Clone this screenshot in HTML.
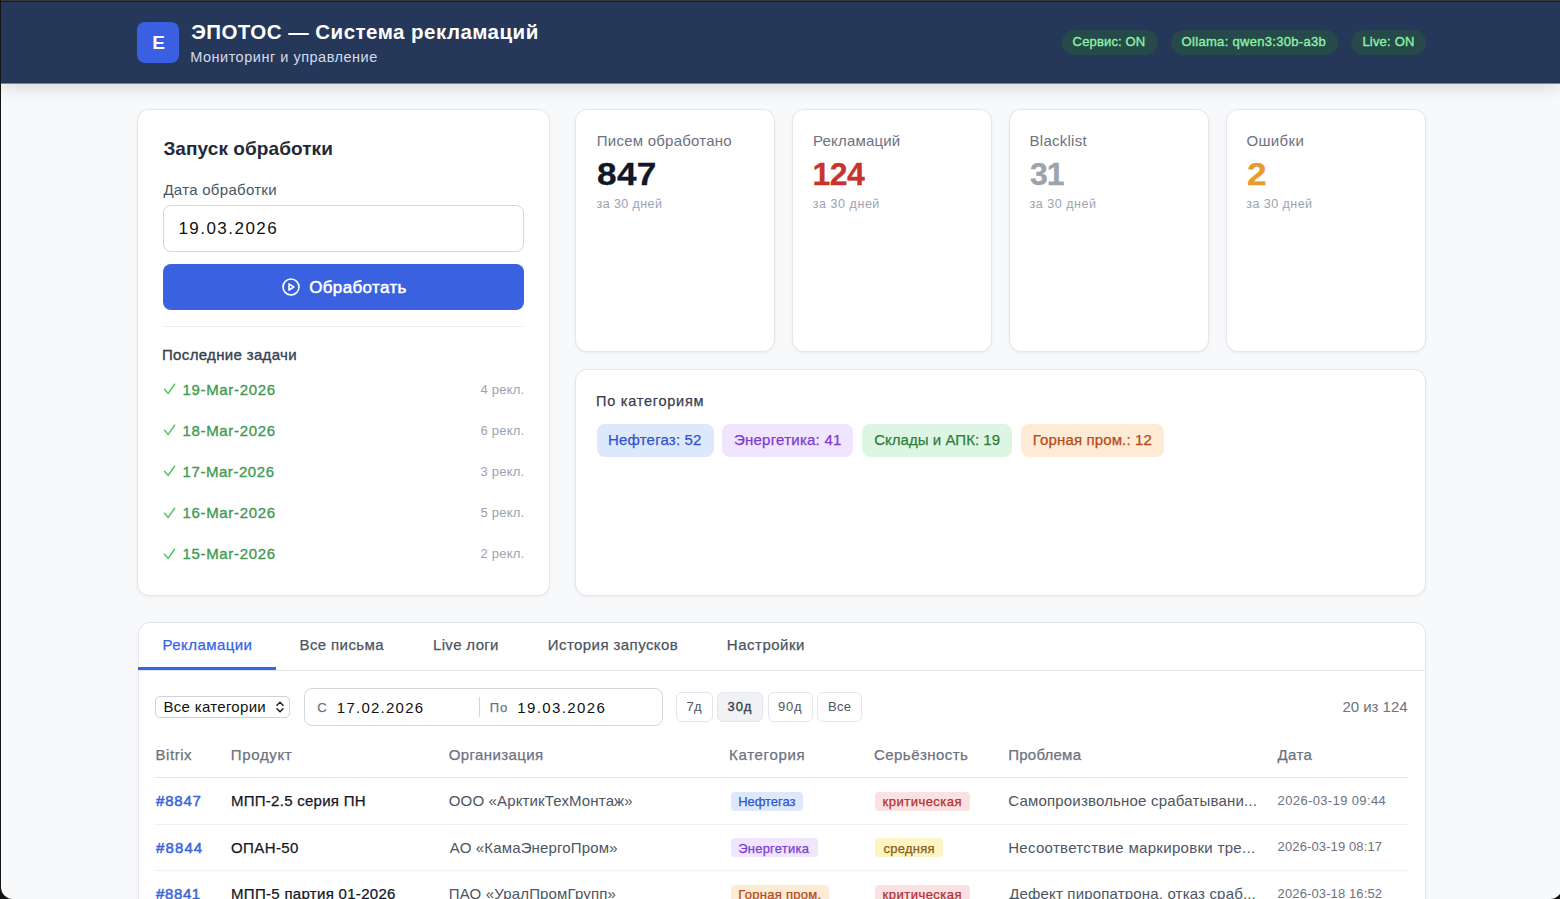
<!DOCTYPE html>
<html lang="ru"><head><meta charset="utf-8"><title>ЭПОТОС — Система рекламаций</title>
<style>*{box-sizing:border-box;margin:0;padding:0}
html,body{width:1560px;height:899px;overflow:hidden}
body{font-family:"Liberation Sans",sans-serif;background:#f8f9fa;position:relative;color:#111827}
.a{position:absolute}
.t{position:absolute;white-space:nowrap;line-height:1}
.hdr{left:0;top:0;width:1560px;height:84px;background:#263859;box-shadow:0 3px 16px rgba(0,0,0,.14)}
.card{position:absolute;background:#fff;border:1px solid #e4e6ea;border-radius:12px;box-shadow:0 1px 3px rgba(16,24,40,.06)}
.pill{top:30px;height:24.5px;border-radius:13px;background:#254a49}
.cat{position:absolute;top:424px;height:32.5px;border-radius:8px}
.qb{position:absolute;top:691.7px;height:30.5px;border:1px solid #e5e7eb;border-radius:6px;background:#fff}
.bdg{position:absolute;height:19px;border-radius:4px}
</style></head><body>
<!-- header -->
<div class="a bx hdr"></div>
<div class="a bx" style="left:0;top:82px;width:1560px;height:1px;background:#203154"></div>
<div class="a bx" style="left:0;top:83px;width:1560px;height:1px;background:#7e8699"></div>
<div class="a bx" style="left:0;top:0;width:1560px;height:1px;background:#3a3a3a"></div>
<div class="a bx" style="left:0;top:1px;width:1560px;height:1px;background:#0f1a2e"></div>
<div class="a bx" style="left:137px;top:22px;width:42px;height:41px;border-radius:8px;background:#3a5fe0"></div>
<div class="a bx pill" style="left:1061.5px;width:96.2px"></div>
<div class="a bx pill" style="left:1170.5px;width:167.5px"></div>
<div class="a bx pill" style="left:1351.3px;width:74.7px"></div>

<!-- left card -->
<div class="card bx" style="left:137px;top:109px;width:413px;height:487px"></div>
<div class="a bx" style="left:163px;top:204.5px;width:361px;height:47px;border:1px solid #d4d7dd;border-radius:8px;background:#fff"></div>
<div class="a bx" style="left:163px;top:264px;width:361px;height:45.5px;border-radius:8px;background:#3a62e0"></div>
<svg class="a bx" style="left:282px;top:278px" width="18" height="18" viewBox="0 0 18 18"><circle cx="9" cy="9" r="8" fill="none" stroke="#fff" stroke-width="1.6"/><path d="M7 5.8v6.4l4.8-3.2z" fill="none" stroke="#fff" stroke-width="1.6" stroke-linejoin="round"/></svg>
<div class="a bx" style="left:163px;top:325.5px;width:361px;height:1px;background:#eef0f3"></div>

<svg class="a bx" style="left:163px;top:383.0px" width="13" height="12" viewBox="0 0 13 12"><path d="M1.5 6.2L5.2 10.4L11.6 1.2" fill="none" stroke="#52c56a" stroke-width="1.5" stroke-linecap="round" stroke-linejoin="round"/></svg>
<svg class="a bx" style="left:163px;top:424.2px" width="13" height="12" viewBox="0 0 13 12"><path d="M1.5 6.2L5.2 10.4L11.6 1.2" fill="none" stroke="#52c56a" stroke-width="1.5" stroke-linecap="round" stroke-linejoin="round"/></svg>
<svg class="a bx" style="left:163px;top:465.4px" width="13" height="12" viewBox="0 0 13 12"><path d="M1.5 6.2L5.2 10.4L11.6 1.2" fill="none" stroke="#52c56a" stroke-width="1.5" stroke-linecap="round" stroke-linejoin="round"/></svg>
<svg class="a bx" style="left:163px;top:506.6px" width="13" height="12" viewBox="0 0 13 12"><path d="M1.5 6.2L5.2 10.4L11.6 1.2" fill="none" stroke="#52c56a" stroke-width="1.5" stroke-linecap="round" stroke-linejoin="round"/></svg>
<svg class="a bx" style="left:163px;top:547.8px" width="13" height="12" viewBox="0 0 13 12"><path d="M1.5 6.2L5.2 10.4L11.6 1.2" fill="none" stroke="#52c56a" stroke-width="1.5" stroke-linecap="round" stroke-linejoin="round"/></svg>
<!-- stat cards -->
<div class="card bx" style="left:575px;top:109px;width:200px;height:243px"></div>
<div class="card bx" style="left:792px;top:109px;width:200px;height:243px"></div>
<div class="card bx" style="left:1009px;top:109px;width:200px;height:243px"></div>
<div class="card bx" style="left:1226px;top:109px;width:200px;height:243px"></div>

<!-- categories -->
<div class="card bx" style="left:575px;top:369px;width:851px;height:227px"></div>
<div class="cat bx" style="left:597px;width:116.5px;background:#dde8fb"></div>
<div class="cat bx" style="left:722px;width:131px;background:#efe5fc"></div>
<div class="cat bx" style="left:862px;width:150px;background:#ddf5e3"></div>
<div class="cat bx" style="left:1021px;width:143px;background:#fdebd6"></div>

<!-- tabs card -->
<div class="card bx" style="left:137.5px;top:621.7px;width:1288.5px;height:400px"></div>
<div class="a bx" style="left:138.5px;top:669.5px;width:1286.5px;height:1px;background:#e5e7eb"></div>
<div class="a bx" style="left:138px;top:667.3px;width:138px;height:2.7px;background:#3563e9"></div>

<div class="a bx" style="left:155.4px;top:696px;width:135px;height:22px;border:1px solid #cfd2d8;border-radius:5px;background:#fff"></div>
<svg class="a bx" style="left:275px;top:700px" width="10" height="14" viewBox="0 0 10 14"><path d="M2 5.2L5 2.2L8 5.2M2 8.8L5 11.8L8 8.8" fill="none" stroke="#222" stroke-width="1.5" stroke-linecap="round" stroke-linejoin="round"/></svg>

<div class="a bx" style="left:303.5px;top:687.8px;width:359.3px;height:38.5px;border:1px solid #d4d7dd;border-radius:8px;background:#fff"></div>
<div class="a bx" style="left:479px;top:697px;width:1px;height:19.5px;background:#d1d5db"></div>

<div class="qb bx" style="left:676.2px;width:36.4px"></div>
<div class="qb bx" style="left:717.2px;width:45.8px;background:#f1f2f5"></div>
<div class="qb bx" style="left:768px;width:44.6px"></div>
<div class="qb bx" style="left:817.2px;width:45.1px"></div>

<div class="a bx" style="left:155px;top:777px;width:1253px;height:1px;background:#e5e7eb"></div>
<div class="bdg bx" style="left:730.8px;top:791.7px;width:72.7px;background:#dde8fb"></div>
<div class="bdg bx" style="left:875.3px;top:791.7px;width:94.3px;background:#fbe1e1"></div>
<div class="a bx" style="left:155px;top:823.5px;width:1253px;height:1px;background:#f0f1f3"></div>
<div class="bdg bx" style="left:730.8px;top:838px;width:87px;background:#efe5fc"></div>
<div class="bdg bx" style="left:875.3px;top:838px;width:67.3px;background:#fdf5c4"></div>
<div class="a bx" style="left:155px;top:870px;width:1253px;height:1px;background:#f0f1f3"></div>
<div class="bdg bx" style="left:730.8px;top:884.6px;width:97.8px;background:#fdebd6"></div>
<div class="bdg bx" style="left:875.3px;top:884.6px;width:94.3px;background:#fbe1e1"></div>
<!-- window frame -->
<div class="a bx" style="left:1px;top:-20px;width:1561px;height:919px;border-radius:0 0 12px 12px;box-shadow:0 0 0 30px #141414"></div>

<div class="t" id="t0" style="left:152.20px;top:32.73px;font-size:19px;font-weight:700;color:#ffffff;letter-spacing:0.000px;">E</div>
<div class="t" id="t1" style="left:191.20px;top:22.06px;font-size:20.5px;font-weight:700;color:#ffffff;letter-spacing:0.469px;">ЭПОТОС — Система рекламаций</div>
<div class="t" id="t2" style="left:190.20px;top:49.53px;font-size:14.5px;font-weight:400;color:#d3dcec;letter-spacing:0.509px;">Мониторинг и управление</div>
<div class="t" id="t3" style="left:1072.60px;top:35.30px;font-size:13px;font-weight:400;color:#8ef0a8;letter-spacing:0.156px;-webkit-text-stroke:0.35px currentColor;">Сервис: ON</div>
<div class="t" id="t4" style="left:1181.60px;top:35.30px;font-size:13px;font-weight:400;color:#8ef0a8;letter-spacing:0.310px;-webkit-text-stroke:0.35px currentColor;">Ollama: qwen3:30b-a3b</div>
<div class="t" id="t5" style="left:1362.40px;top:35.30px;font-size:13px;font-weight:400;color:#8ef0a8;letter-spacing:0.200px;-webkit-text-stroke:0.35px currentColor;">Live: ON</div>
<div class="t" id="t6" style="left:163.40px;top:138.93px;font-size:19px;font-weight:700;color:#1f2937;letter-spacing:0.080px;">Запуск обработки</div>
<div class="t" id="t7" style="left:163.40px;top:181.91px;font-size:15px;font-weight:400;color:#4b5563;letter-spacing:0.292px;">Дата обработки</div>
<div class="t" id="t8" style="left:178.40px;top:220.02px;font-size:17px;font-weight:400;color:#111111;letter-spacing:1.467px;">19.03.2026</div>
<div class="t" id="t9" style="left:309.20px;top:278.72px;font-size:17px;font-weight:400;color:#ffffff;letter-spacing:0.356px;-webkit-text-stroke:0.5px currentColor;">Обработать</div>
<div class="t" id="t10" style="left:162.00px;top:346.71px;font-size:15px;font-weight:400;color:#374151;letter-spacing:0.340px;-webkit-text-stroke:0.35px currentColor;">Последние задачи</div>
<div class="t" id="t11" style="left:182.60px;top:381.51px;font-size:15px;font-weight:400;color:#3f9b52;letter-spacing:0.650px;-webkit-text-stroke:0.35px currentColor;">19-Mar-2026</div>
<div class="t" id="t12" style="left:480.60px;top:382.60px;font-size:13px;font-weight:400;color:#9ca3af;letter-spacing:0.183px;">4 рекл.</div>
<div class="t" id="t13" style="left:182.60px;top:422.71px;font-size:15px;font-weight:400;color:#3f9b52;letter-spacing:0.650px;-webkit-text-stroke:0.35px currentColor;">18-Mar-2026</div>
<div class="t" id="t14" style="left:480.60px;top:423.80px;font-size:13px;font-weight:400;color:#9ca3af;letter-spacing:0.183px;">6 рекл.</div>
<div class="t" id="t15" style="left:182.60px;top:463.91px;font-size:15px;font-weight:400;color:#3f9b52;letter-spacing:0.550px;-webkit-text-stroke:0.35px currentColor;">17-Mar-2026</div>
<div class="t" id="t16" style="left:480.60px;top:465.00px;font-size:13px;font-weight:400;color:#9ca3af;letter-spacing:0.183px;">3 рекл.</div>
<div class="t" id="t17" style="left:182.60px;top:505.11px;font-size:15px;font-weight:400;color:#3f9b52;letter-spacing:0.650px;-webkit-text-stroke:0.35px currentColor;">16-Mar-2026</div>
<div class="t" id="t18" style="left:480.60px;top:506.20px;font-size:13px;font-weight:400;color:#9ca3af;letter-spacing:0.183px;">5 рекл.</div>
<div class="t" id="t19" style="left:182.60px;top:546.31px;font-size:15px;font-weight:400;color:#3f9b52;letter-spacing:0.650px;-webkit-text-stroke:0.35px currentColor;">15-Mar-2026</div>
<div class="t" id="t20" style="left:480.60px;top:547.40px;font-size:13px;font-weight:400;color:#9ca3af;letter-spacing:0.183px;">2 рекл.</div>
<div class="t" id="t21" style="left:596.80px;top:132.71px;font-size:15px;font-weight:400;color:#6b7280;letter-spacing:0.233px;">Писем обработано</div>
<div class="t" id="t22" style="left:597.20px;top:157.93px;font-size:32px;font-weight:700;color:#111827;letter-spacing:0.300px;-webkit-text-stroke:0.3px currentColor;transform:scaleX(1.1);transform-origin:0 0;">847</div>
<div class="t" id="t23" style="left:596.60px;top:197.93px;font-size:12.5px;font-weight:400;color:#9ca3af;letter-spacing:0.400px;">за 30 дней</div>
<div class="t" id="t24" style="left:813.00px;top:132.71px;font-size:15px;font-weight:400;color:#6b7280;letter-spacing:0.178px;">Рекламаций</div>
<div class="t" id="t25" style="left:812.40px;top:157.93px;font-size:32px;font-weight:700;color:#c8342d;letter-spacing:-0.550px;-webkit-text-stroke:0.3px currentColor;">124</div>
<div class="t" id="t26" style="left:812.80px;top:197.93px;font-size:12.5px;font-weight:400;color:#9ca3af;letter-spacing:0.544px;">за 30 дней</div>
<div class="t" id="t27" style="left:1029.60px;top:132.71px;font-size:15px;font-weight:400;color:#6b7280;letter-spacing:0.250px;">Blacklist</div>
<div class="t" id="t28" style="left:1030.00px;top:157.93px;font-size:32px;font-weight:700;color:#9ca3af;letter-spacing:-1.100px;-webkit-text-stroke:0.3px currentColor;">31</div>
<div class="t" id="t29" style="left:1029.40px;top:197.93px;font-size:12.5px;font-weight:400;color:#9ca3af;letter-spacing:0.544px;">за 30 дней</div>
<div class="t" id="t30" style="left:1246.40px;top:132.71px;font-size:15px;font-weight:400;color:#6b7280;letter-spacing:0.380px;">Ошибки</div>
<div class="t" id="t31" style="left:1246.80px;top:157.93px;font-size:32px;font-weight:700;color:#e89a2c;letter-spacing:0.000px;-webkit-text-stroke:0.3px currentColor;transform:scaleX(1.1);transform-origin:0 0;">2</div>
<div class="t" id="t32" style="left:1246.20px;top:197.93px;font-size:12.5px;font-weight:400;color:#9ca3af;letter-spacing:0.467px;">за 30 дней</div>
<div class="t" id="t33" style="left:596.00px;top:393.93px;font-size:14.5px;font-weight:400;color:#374151;letter-spacing:0.750px;-webkit-text-stroke:0.25px currentColor;">По категориям</div>
<div class="t" id="t34" style="left:608.00px;top:432.31px;font-size:15px;font-weight:400;color:#2f54d0;letter-spacing:0.182px;-webkit-text-stroke:0.25px currentColor;">Нефтегаз: 52</div>
<div class="t" id="t35" style="left:734.00px;top:432.31px;font-size:15px;font-weight:400;color:#7e3ad0;letter-spacing:0.238px;-webkit-text-stroke:0.25px currentColor;">Энергетика: 41</div>
<div class="t" id="t36" style="left:874.20px;top:432.31px;font-size:15px;font-weight:400;color:#2f7d3e;letter-spacing:0.040px;-webkit-text-stroke:0.25px currentColor;">Склады и АПК: 19</div>
<div class="t" id="t37" style="left:1032.80px;top:432.31px;font-size:15px;font-weight:400;color:#b5491a;letter-spacing:0.133px;-webkit-text-stroke:0.25px currentColor;">Горная пром.: 12</div>
<div class="t" id="t38" style="left:162.60px;top:636.91px;font-size:15px;font-weight:400;color:#3563e9;letter-spacing:0.411px;-webkit-text-stroke:0.25px currentColor;">Рекламации</div>
<div class="t" id="t39" style="left:299.60px;top:636.91px;font-size:15px;font-weight:400;color:#4b5563;letter-spacing:0.378px;-webkit-text-stroke:0.25px currentColor;">Все письма</div>
<div class="t" id="t40" style="left:433.00px;top:636.91px;font-size:15px;font-weight:400;color:#4b5563;letter-spacing:0.338px;-webkit-text-stroke:0.25px currentColor;">Live логи</div>
<div class="t" id="t41" style="left:547.80px;top:636.91px;font-size:15px;font-weight:400;color:#4b5563;letter-spacing:0.427px;-webkit-text-stroke:0.25px currentColor;">История запусков</div>
<div class="t" id="t42" style="left:726.80px;top:636.91px;font-size:15px;font-weight:400;color:#4b5563;letter-spacing:0.512px;-webkit-text-stroke:0.25px currentColor;">Настройки</div>
<div class="t" id="t43" style="left:163.40px;top:699.41px;font-size:15px;font-weight:400;color:#111111;letter-spacing:0.317px;">Все категории</div>
<div class="t" id="t44" style="left:317.20px;top:700.70px;font-size:13px;font-weight:400;color:#6b7280;letter-spacing:0.000px;-webkit-text-stroke:0.25px currentColor;">С</div>
<div class="t" id="t45" style="left:336.80px;top:699.71px;font-size:15px;font-weight:400;color:#111111;letter-spacing:1.244px;">17.02.2026</div>
<div class="t" id="t46" style="left:489.80px;top:700.70px;font-size:13px;font-weight:400;color:#6b7280;letter-spacing:0.800px;-webkit-text-stroke:0.25px currentColor;">По</div>
<div class="t" id="t47" style="left:517.20px;top:699.71px;font-size:15px;font-weight:400;color:#111111;letter-spacing:1.389px;">19.03.2026</div>
<div class="t" id="t48" style="left:686.40px;top:700.30px;font-size:13px;font-weight:400;color:#4b5563;letter-spacing:0.300px;">7д</div>
<div class="t" id="t49" style="left:727.60px;top:700.30px;font-size:13px;font-weight:400;color:#374151;letter-spacing:0.850px;-webkit-text-stroke:0.35px currentColor;">30д</div>
<div class="t" id="t50" style="left:778.00px;top:700.30px;font-size:13px;font-weight:400;color:#4b5563;letter-spacing:0.800px;">90д</div>
<div class="t" id="t51" style="left:828.00px;top:700.30px;font-size:13px;font-weight:400;color:#4b5563;letter-spacing:0.250px;">Все</div>
<div class="t" id="t52" style="left:1342.40px;top:699.21px;font-size:15px;font-weight:400;color:#6b7280;letter-spacing:-0.012px;">20 из 124</div>
<div class="t" id="t53" style="left:155.40px;top:746.81px;font-size:15px;font-weight:400;color:#6b7280;letter-spacing:0.580px;-webkit-text-stroke:0.25px currentColor;">Bitrix</div>
<div class="t" id="t54" style="left:230.80px;top:746.81px;font-size:15px;font-weight:400;color:#6b7280;letter-spacing:0.650px;-webkit-text-stroke:0.25px currentColor;">Продукт</div>
<div class="t" id="t55" style="left:448.80px;top:746.81px;font-size:15px;font-weight:400;color:#6b7280;letter-spacing:0.380px;-webkit-text-stroke:0.25px currentColor;">Организация</div>
<div class="t" id="t56" style="left:729.00px;top:746.81px;font-size:15px;font-weight:400;color:#6b7280;letter-spacing:0.688px;-webkit-text-stroke:0.25px currentColor;">Категория</div>
<div class="t" id="t57" style="left:874.00px;top:746.81px;font-size:15px;font-weight:400;color:#6b7280;letter-spacing:0.450px;-webkit-text-stroke:0.25px currentColor;">Серьёзность</div>
<div class="t" id="t58" style="left:1008.20px;top:746.81px;font-size:15px;font-weight:400;color:#6b7280;letter-spacing:0.243px;-webkit-text-stroke:0.25px currentColor;">Проблема</div>
<div class="t" id="t59" style="left:1277.60px;top:746.81px;font-size:15px;font-weight:400;color:#6b7280;letter-spacing:0.367px;-webkit-text-stroke:0.25px currentColor;">Дата</div>
<div class="t" id="t60" style="left:156.00px;top:793.31px;font-size:15px;font-weight:400;color:#3a66d8;letter-spacing:0.800px;-webkit-text-stroke:0.5px currentColor;">#8847</div>
<div class="t" id="t61" style="left:231.00px;top:793.31px;font-size:15px;font-weight:400;color:#111827;letter-spacing:0.267px;-webkit-text-stroke:0.25px currentColor;">МПП-2.5 серия ПН</div>
<div class="t" id="t62" style="left:448.80px;top:793.31px;font-size:15px;font-weight:400;color:#4b5563;letter-spacing:0.145px;">ООО «АрктикТехМонтаж»</div>
<div class="t" id="t63" style="left:1008.20px;top:793.31px;font-size:15px;font-weight:400;color:#4b5563;letter-spacing:0.190px;">Самопроизвольное срабатывани...</div>
<div class="t" id="t64" style="left:1277.60px;top:793.90px;font-size:13px;font-weight:400;color:#6b7280;letter-spacing:0.367px;">2026-03-19 09:44</div>
<div class="t" id="t65" style="left:156.00px;top:839.61px;font-size:15px;font-weight:400;color:#3a66d8;letter-spacing:1.125px;-webkit-text-stroke:0.5px currentColor;">#8844</div>
<div class="t" id="t66" style="left:231.00px;top:839.61px;font-size:15px;font-weight:400;color:#111827;letter-spacing:0.400px;-webkit-text-stroke:0.25px currentColor;">ОПАН-50</div>
<div class="t" id="t67" style="left:449.80px;top:839.61px;font-size:15px;font-weight:400;color:#4b5563;letter-spacing:0.156px;">АО «КамаЭнергоПром»</div>
<div class="t" id="t68" style="left:1008.20px;top:839.61px;font-size:15px;font-weight:400;color:#4b5563;letter-spacing:0.306px;">Несоответствие маркировки тре...</div>
<div class="t" id="t69" style="left:1277.60px;top:840.20px;font-size:13px;font-weight:400;color:#6b7280;letter-spacing:0.120px;">2026-03-19 08:17</div>
<div class="t" id="t70" style="left:156.00px;top:885.91px;font-size:15px;font-weight:400;color:#3a66d8;letter-spacing:0.625px;-webkit-text-stroke:0.5px currentColor;">#8841</div>
<div class="t" id="t71" style="left:231.00px;top:885.91px;font-size:15px;font-weight:400;color:#111827;letter-spacing:0.305px;-webkit-text-stroke:0.25px currentColor;">МПП-5 партия 01-2026</div>
<div class="t" id="t72" style="left:448.80px;top:885.91px;font-size:15px;font-weight:400;color:#4b5563;letter-spacing:0.156px;">ПАО «УралПромГрупп»</div>
<div class="t" id="t73" style="left:1009.20px;top:885.91px;font-size:15px;font-weight:400;color:#4b5563;letter-spacing:0.172px;">Дефект пиропатрона, отказ сраб...</div>
<div class="t" id="t74" style="left:1277.60px;top:886.50px;font-size:13px;font-weight:400;color:#6b7280;letter-spacing:0.120px;">2026-03-18 16:52</div>
<div class="t" id="t75" style="left:738.20px;top:795.30px;font-size:13px;font-weight:400;color:#2f54d0;letter-spacing:-0.043px;-webkit-text-stroke:0.25px currentColor;">Нефтегаз</div>
<div class="t" id="t76" style="left:882.60px;top:795.30px;font-size:13px;font-weight:400;color:#b42f2f;letter-spacing:0.480px;-webkit-text-stroke:0.25px currentColor;">критическая</div>
<div class="t" id="t77" style="left:738.20px;top:841.60px;font-size:13px;font-weight:400;color:#7e3ad0;letter-spacing:0.233px;-webkit-text-stroke:0.25px currentColor;">Энергетика</div>
<div class="t" id="t78" style="left:883.60px;top:841.60px;font-size:13px;font-weight:400;color:#8a5a14;letter-spacing:0.250px;-webkit-text-stroke:0.25px currentColor;">средняя</div>
<div class="t" id="t79" style="left:738.20px;top:887.90px;font-size:13px;font-weight:400;color:#b5491a;letter-spacing:0.291px;-webkit-text-stroke:0.25px currentColor;">Горная пром.</div>
<div class="t" id="t80" style="left:882.60px;top:887.90px;font-size:13px;font-weight:400;color:#b42f2f;letter-spacing:0.480px;-webkit-text-stroke:0.25px currentColor;">критическая</div>
</body></html>
